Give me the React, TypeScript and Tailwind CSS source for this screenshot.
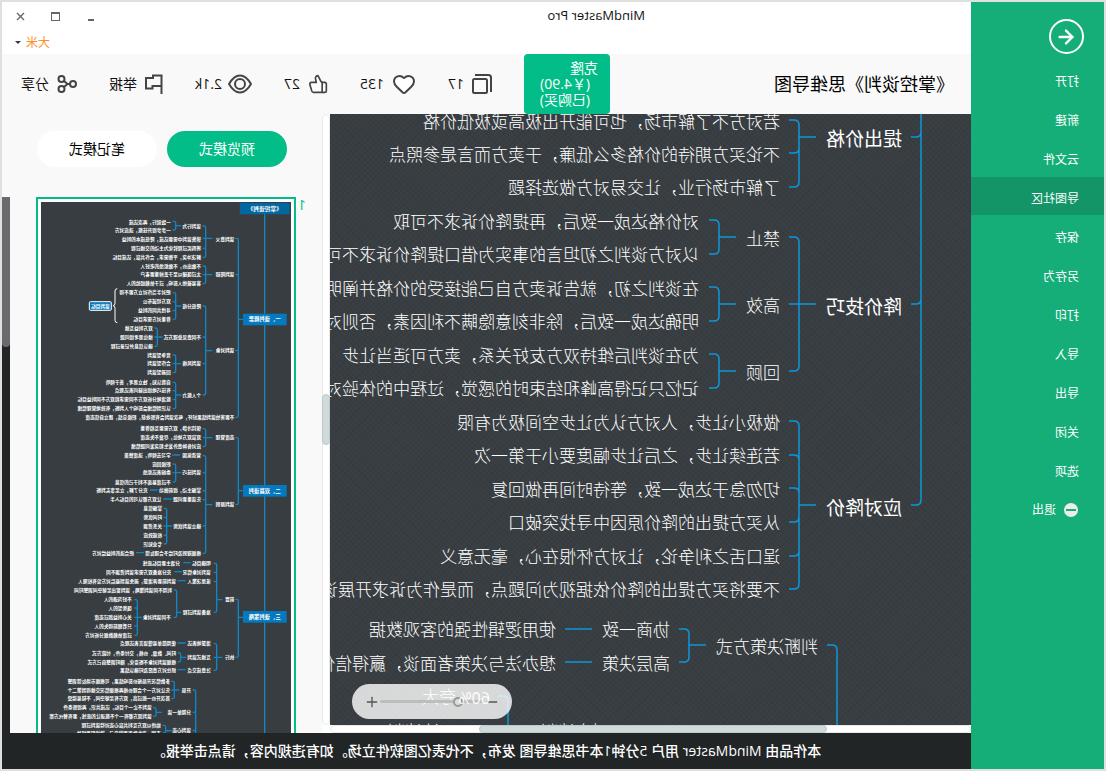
import React from 'react';
import { ArrowLeft, Heart, Minus, Plus, ThumbsUp } from 'lucide-react';

const CJK = "font-['Open_Sans','Noto_Sans_CJK_SC',sans-serif]";

interface NodeItem {
  x: number;
  y: number;
  text: string;
  big?: boolean;
}

interface ForkItem {
  trunk: number;
  from?: number;
  at?: number;
  ys: number[];
}

const menuItems = ['打开', '新建', '云文件', '导图社区', '保存', '另存为', '打印', '导入', '导出', '关闭', '选项'];

const mapNodes: NodeItem[] = [
  { x: 69, y: 26, text: '提出价格', big: true },
  { x: 69, y: 194, text: '降价技巧', big: true },
  { x: 69, y: 395, text: '应对降价', big: true },
  { x: 191, y: 8, text: '若对方不了解市场，也可能开出极高或极低价格' },
  { x: 191, y: 41, text: '不论买方期待的价格多么低廉，于卖方而言是参照点' },
  { x: 191, y: 74, text: '了解市场行业，让交易对方做选择题' },
  { x: 191, y: 125, text: '禁止' },
  { x: 272, y: 108, text: '对价格达成一致后，再提降价诉求不可取' },
  { x: 272, y: 141, text: '以对方谈判之初坦言的事实为借口提降价诉求不可取' },
  { x: 191, y: 192, text: '高效' },
  { x: 272, y: 175, text: '在谈判之初，就告诉卖方自己能接受的价格并阐明' },
  { x: 272, y: 208, text: '明确达成一致后，除非刻意隐瞒不利因素，否则对方' },
  { x: 191, y: 259, text: '回顾' },
  { x: 272, y: 242, text: '为在谈判后维持双方友好关系，卖方可适当让步' },
  { x: 272, y: 275, text: '记忆只记得高峰和结束时的感觉，过程中的体验对' },
  { x: 191, y: 309, text: '做极小让步，人对方认为让步空间极为有限' },
  { x: 191, y: 342, text: '若连续让步，之后让步幅度要小于第一次' },
  { x: 191, y: 376, text: '切勿急于达成一致，等待时间再做回复' },
  { x: 191, y: 409, text: '从买方提出的降价原因中寻找突破口' },
  { x: 191, y: 443, text: '逞口舌之利争论，让对方怀恨在心，毫无意义' },
  { x: 191, y: 476, text: '不要将买方提出的降价依据视为问题点，而是作为诉求开展谈' },
  { x: 153, y: 533, text: '判断决策方式' },
  { x: 301, y: 516, text: '协商一致' },
  { x: 415, y: 516, text: '使用逻辑性强的客观数据' },
  { x: 301, y: 550, text: '高层决策' },
  { x: 415, y: 550, text: '想办法与决策者面谈，赢得信任' },
  { x: 515, y: 583, text: '夸大' },
  { x: 362, y: 618, text: '对方谈判' },
  { x: 515, y: 618, text: '只达谈判' },
];

const mapForks: ForkItem[] = [
  { trunk: 172, from: 155, at: 23, ys: [6, 39, 73] },
  { trunk: 172, from: 155, at: 190, ys: [123, 190, 257] },
  { trunk: 252, from: 235, at: 123, ys: [106, 140] },
  { trunk: 252, from: 235, at: 190, ys: [173, 207] },
  { trunk: 252, from: 235, at: 257, ys: [240, 274] },
  { trunk: 172, from: 155, at: 391, ys: [307, 341, 374, 408, 442, 475] },
  { trunk: 50, ys: [-60, 23, 190, 391] },
  { trunk: 282, from: 265, at: 531, ys: [515, 548] },
  { trunk: 134, ys: [531, 700] },
  { trunk: 463, ys: [582, 700] },
];

// Overview of the whole map, in thirds of a pixel
const pageNodes: NodeItem[] = [
  { x: 170, y: 112, text: '谈判意义' },
  { x: 270, y: 72, text: '谈判行为' },
  { x: 361, y: 60, text: '一致就行，再次达成' },
  { x: 361, y: 86, text: '一步步提升技能，适应对方' },
  { x: 270, y: 112, text: '销售谈判中需要达成，降低成本的利益' },
  { x: 270, y: 139, text: '将购买过程转化为主动的交换过程' },
  { x: 270, y: 166, text: '解决冲突，平衡需求，合作共赢，达成目标' },
  { x: 170, y: 218, text: '谈判障碍' },
  { x: 270, y: 192, text: '不敢出价，不敢拒绝的老好人' },
  { x: 270, y: 218, text: '太过强硬以至于丢掉重要客户' },
  { x: 270, y: 245, text: '容易被他人影响，过于依赖经验的人' },
  { x: 170, y: 446, text: '谈判对象' },
  { x: 270, y: 312, text: '降低分歧' },
  { x: 361, y: 272, text: '把对手当作对立方要不得' },
  { x: 361, y: 299, text: '双方坦诚布公' },
  { x: 361, y: 326, text: '寻找共同的利益' },
  { x: 361, y: 352, text: '尊重对方需求目标' },
  { x: 270, y: 405, text: '不同意见处理方式' },
  { x: 415, y: 378, text: '双方利益互换' },
  { x: 415, y: 405, text: '换位思考提问题' },
  { x: 415, y: 433, text: '确认信息并记录过程' },
  { x: 270, y: 485, text: '谈判风格' },
  { x: 361, y: 459, text: '竞争型谈判' },
  { x: 361, y: 485, text: '合作型谈判' },
  { x: 361, y: 512, text: '回避型谈判' },
  { x: 270, y: 579, text: '个人能力' },
  { x: 361, y: 541, text: '自我认知，独立思考，善于倾听' },
  { x: 361, y: 566, text: '有技巧地提出疑问表达观点' },
  { x: 361, y: 593, text: '能清晰分析双方不同需求和双方不同利益目标' },
  { x: 361, y: 620, text: '认识到情绪会影响个人判断，有效地管理情绪' },
  { x: 170, y: 646, text: '不要害怕谈判结果好坏，每次谈判会有新收获，积极总结，建立自信态度' },
  { x: 170, y: 707, text: '态度管理' },
  { x: 270, y: 680, text: '保持冷静，双方需要互相尊重' },
  { x: 270, y: 707, text: '双赢双方地位，尽量不失态度' },
  { x: 270, y: 734, text: '应对各种意外发生和突发问题情绪' },
  { x: 170, y: 908, text: '谈判原则' },
  { x: 270, y: 761, text: '营造氛围' },
  { x: 361, y: 761, text: '学习去倾听，适度赞美' },
  { x: 270, y: 812, text: '谈判技巧' },
  { x: 361, y: 786, text: '积极回应' },
  { x: 361, y: 812, text: '委婉表达拒绝' },
  { x: 361, y: 840, text: '不过度暴露不利于己的信息' },
  { x: 270, y: 866, text: '掌握主动，提前做功' },
  { x: 430, y: 866, text: '充分了解，立足事实判断' },
  { x: 270, y: 893, text: '先谈重要问题' },
  { x: 389, y: 893, text: '让双方都认可的目标入手' },
  { x: 270, y: 972, text: '确立谈判优势' },
  { x: 387, y: 919, text: '掌握信息' },
  { x: 387, y: 946, text: '时间优势' },
  { x: 387, y: 972, text: '关系资源' },
  { x: 387, y: 1000, text: '权威效应' },
  { x: 387, y: 1026, text: '专业知识' },
  { x: 270, y: 1054, text: '根据规则及时给予合理反馈' },
  { x: 471, y: 1054, text: '把合适的利益给对方' },
  { x: 170, y: 1193, text: '前置' },
  { x: 241, y: 1084, text: '明确目标' },
  { x: 333, y: 1084, text: '分清主要目标底线' },
  { x: 241, y: 1111, text: '谈判对象情况' },
  { x: 359, y: 1111, text: '充分准备双方需求谈判资源不同' },
  { x: 241, y: 1138, text: '谁是决策人' },
  { x: 345, y: 1138, text: '谈判前要弄清楚，避免谈到最后对方没有权限人' },
  { x: 241, y: 1231, text: '准备谈判过程' },
  { x: 357, y: 1164, text: '利用不同谈判策略，谈判留出足够空间调整时间' },
  { x: 361, y: 1246, text: '不同谈判对象' },
  { x: 478, y: 1193, text: '不好沟通的人' },
  { x: 478, y: 1218, text: '强势型的人' },
  { x: 478, y: 1246, text: '关心利益超过态度' },
  { x: 478, y: 1272, text: '只看眼前得失的人' },
  { x: 478, y: 1300, text: '过度依赖数据分析对方' },
  { x: 170, y: 1366, text: '执行' },
  { x: 241, y: 1325, text: '清楚地表达' },
  { x: 345, y: 1325, text: '使用简单易懂语言表达观点' },
  { x: 241, y: 1366, text: '互换式谈判' },
  { x: 345, y: 1353, text: '时间、数量、价格，交付条件，付款方式' },
  { x: 345, y: 1380, text: '根据谈判对象不断变化，随时调整自己方式' },
  { x: 241, y: 1405, text: '注意成交点' },
  { x: 345, y: 1405, text: '抓住对方意愿及时确认结果' },
  { x: 300, y: 1464, text: '开局' },
  { x: 363, y: 1438, text: '多数情况开局报价影响结果，可根据市场反馈调整' },
  { x: 363, y: 1464, text: '先让对方一个合理价格再根据情况交换得到第二个' },
  { x: 363, y: 1490, text: '首次开价一般过高，双方有足够空间，不轻易接受' },
  { x: 300, y: 1531, text: '分期单一谈' },
  { x: 418, y: 1517, text: '谈判不止一个目标，达成共识，再提新条件' },
  { x: 418, y: 1543, text: '谈判双方都有一个不能退让的底线，要有替代方案' },
  { x: 300, y: 1586, text: '谈判心态' },
  { x: 391, y: 1570, text: '始终以双方互利共赢心态对待谈判过程' },
  { x: 391, y: 1593, text: '不因一次失败而否定自己，持续积累经验' },
];

const pageForks: ForkItem[] = [
  { trunk: 158, from: 144, at: 352, ys: [109, 218, 446, 646] },
  { trunk: 256, from: 236, at: 109, ys: [72, 109, 139, 166] },
  { trunk: 346, from: 330, at: 71, ys: [58, 84] },
  { trunk: 256, from: 236, at: 218, ys: [192, 218, 245] },
  { trunk: 256, from: 236, at: 446, ys: [312, 405, 485, 579] },
  { trunk: 346, from: 330, at: 312, ys: [272, 299, 326, 352] },
  { trunk: 401, from: 385, at: 405, ys: [378, 405, 433] },
  { trunk: 346, from: 330, at: 485, ys: [459, 485, 512] },
  { trunk: 346, from: 330, at: 579, ys: [541, 566, 593, 620] },
  { trunk: 158, from: 144, at: 866, ys: [707, 908] },
  { trunk: 256, from: 236, at: 707, ys: [680, 707, 734] },
  { trunk: 256, from: 236, at: 908, ys: [761, 812, 866, 893, 972, 1054] },
  { trunk: 346, from: 330, at: 812, ys: [786, 812, 840] },
  { trunk: 373, from: 357, at: 972, ys: [919, 946, 972, 1000, 1026] },
  { trunk: 158, from: 144, at: 1246, ys: [1192, 1366] },
  { trunk: 223, from: 206, at: 1193, ys: [1084, 1111, 1138, 1231] },
  { trunk: 343, from: 330, at: 1231, ys: [1164, 1246] },
  { trunk: 461, from: 447, at: 1246, ys: [1193, 1218, 1246, 1272, 1300] },
  { trunk: 223, from: 206, at: 1366, ys: [1325, 1366, 1405] },
  { trunk: 331, from: 315, at: 1366, ys: [1353, 1380] },
  { trunk: 286, ys: [1464, 1531, 1586, 1700] },
  { trunk: 350, from: 335, at: 1464, ys: [1438, 1464, 1490] },
  { trunk: 405, from: 388, at: 1531, ys: [1517, 1543] },
  { trunk: 376, from: 358, at: 1586, ys: [1570, 1593] },
];

const pageSections = [
  { y: 335, text: '一、谈判概要' },
  { y: 849, text: '二、双赢谈判' },
  { y: 1227, text: '三、谈判策略' },
];

const forkPath = ({ trunk, from, at, ys }: ForkItem, radius: number, stub: number) => {
  const first = ys[0];
  const last = ys[ys.length - 1];
  const mid = at ?? first + radius;
  const stem = from === undefined ? '' : `M${from} ${mid}H${trunk}`;
  const arms = ys
    .map((y) => {
      if (y === mid) return `M${trunk} ${y}H${trunk + stub}`;
      const bend = y < mid ? radius : -radius;
      return `M${trunk} ${y + bend}Q${trunk} ${y} ${trunk + radius} ${y}H${trunk + stub}`;
    })
    .join('');
  return `${stem}M${trunk} ${first + radius}V${last - radius}${arms}`;
};

const Sidebar: React.FC = () => (
  <aside className="flex w-[133px] shrink-0 flex-col bg-[#15ae79] text-xs text-white">
    <button
      aria-label="返回"
      className="mt-[17px] ml-5 flex h-[35px] w-[35px] items-center justify-center rounded-full border-2 border-white"
    >
      <ArrowLeft className="h-[22px] w-[22px]" strokeWidth={2.6} />
    </button>
    <nav className="mt-1.5 flex flex-col gap-px">
      {menuItems.map((item) => (
        <button
          key={item}
          className={`flex h-[38px] items-center pt-1.5 pl-[25px] text-left ${item === '导图社区' ? 'bg-[#139568]' : ''}`}
        >
          {item}
        </button>
      ))}
      <button className="flex h-[38px] items-center gap-2 pt-1 pl-[26px]">
        <span className="flex h-3.5 w-3.5 items-center justify-center rounded-full bg-[#ececec]">
          <span className="h-0.5 w-2.5 bg-[#15ae79]" />
        </span>
        <span>退出</span>
      </button>
    </nav>
  </aside>
);

const TitleBar: React.FC = () => (
  <header className="h-[52px] shrink-0 bg-white">
    <div className="flex h-7 items-center justify-between pr-3.5 pl-[326px]">
      <h1 className="text-[13px] text-[#111]">MindMaster Pro</h1>
      <div className="flex items-center gap-[26px] text-[#666]">
        <button aria-label="最小化" className="flex h-3 w-2 items-end pb-px">
          <span className="h-0.5 w-1.5 bg-[#666]" />
        </button>
        <button aria-label="最大化" className="h-[9px] w-[9px] border border-t-2 border-[#666]" />
        <button aria-label="关闭">
          <svg width="9" height="9" viewBox="0 0 9 9" stroke="currentColor" strokeWidth="1.4">
            <path d="M1 1l7 7M8 1L1 8" />
          </svg>
        </button>
      </div>
    </div>
    <div className="flex h-6 items-center justify-end pt-0.5 pr-3 text-xs text-[#ff9029]">
      <button className="flex items-center gap-1">
        大米
        <svg width="8" height="4" viewBox="0 0 8 4" fill="#333b4a">
          <path d="M1 0h6L4 3z" />
        </svg>
      </button>
    </div>
  </header>
);

const CloneIcon: React.FC = () => (
  <svg width="20" height="20" viewBox="0 0 20 20" fill="none" stroke="#444" strokeWidth="2">
    <rect x="5" y="5" width="14" height="14" rx="1.5" />
    <path d="M1 18V3.500Q1 1 3.500 1H17" />
  </svg>
);

const EyeIcon: React.FC = () => (
  <svg width="24" height="20" viewBox="0 0 24 20" fill="none" stroke="#444" strokeWidth="2">
    <path d="M1 10C4.500 4 8 1.500 12 1.500S19.500 4 23 10c-3.500 6-7 8.500-11 8.500S4.500 16 1 10z" />
    <circle cx="12" cy="10" r="5" />
  </svg>
);

const FlagIcon: React.FC = () => (
  <svg width="18" height="20" viewBox="0 0 18 20" fill="none" stroke="#444" strokeWidth="2">
    <path d="M1.500 20V1.500H10V4h7v10.500H10.500V12h-9" />
  </svg>
);

const ShareIcon: React.FC = () => (
  <svg width="20" height="20" viewBox="0 0 20 20" fill="none" stroke="#444" strokeWidth="2">
    <circle cx="4" cy="10" r="3" />
    <circle cx="15.500" cy="5" r="3" />
    <circle cx="15.500" cy="15" r="3" />
    <path d="M7 10H9.500L13 7M9.500 10L13 13" />
  </svg>
);

const Toolbar: React.FC = () => (
  <div className="flex h-[60px] shrink-0 items-center bg-[#f9f9f9] pr-[19px] pl-[17px] text-sm text-[#111]">
    <h2 className="text-lg whitespace-nowrap text-black">《掌控谈判》思维导图</h2>
    <div className="ml-auto flex items-center gap-8 whitespace-nowrap">
      <button className="flex h-[60px] w-[86px] flex-col items-start justify-center rounded-sm bg-[#02bd88] pl-3 text-left leading-4 text-white">
        <span>克隆</span>
        <span className="pl-2">(￥4.90)</span>
        <span className="pl-2">(已购买)</span>
      </button>
      <button className="flex items-center gap-2">
        <CloneIcon />
        17
      </button>
      <button className="flex items-center gap-2">
        <Heart className="h-6 w-6 text-[#444]" fill="#fff" />
        135
      </button>
      <button className="flex items-center gap-2">
        <ThumbsUp className="h-5 w-5 text-[#444]" fill="#fff" />
        27
      </button>
      <span className="flex items-center gap-1.5">
        <EyeIcon />
        2.1k
      </span>
      <button className="flex items-center gap-2">
        <FlagIcon />
        举报
      </button>
      <button className="flex items-center gap-2">
        <ShareIcon />
        分享
      </button>
    </div>
  </div>
);

const ZoomControl: React.FC = () => (
  <div className="absolute right-[22px] bottom-1.5 flex h-[35px] w-40 items-center rounded-full bg-white/80 px-3 text-[#555]">
    <button aria-label="缩小">
      <Minus className="h-4 w-4" />
    </button>
    <input
      type="range"
      aria-label="缩放"
      min={0}
      max={100}
      defaultValue={22}
      className="h-[3px] min-w-0 flex-1 appearance-none rounded bg-[#bdbdbd] [&::-webkit-slider-thumb]:h-2.5 [&::-webkit-slider-thumb]:w-2.5 [&::-webkit-slider-thumb]:appearance-none [&::-webkit-slider-thumb]:rounded-full [&::-webkit-slider-thumb]:border-2 [&::-webkit-slider-thumb]:border-[#999] [&::-webkit-slider-thumb]:bg-[#ddd]"
    />
    <button aria-label="放大">
      <Plus className="h-4 w-4" />
    </button>
    <span className="absolute top-1 left-[22px] text-base leading-5 text-white">60%</span>
  </div>
);

const MapCanvas: React.FC = () => (
  <main className="relative min-w-0 flex-1 overflow-hidden bg-[#3a3f43] bg-[repeating-linear-gradient(45deg,rgba(0,0,0,.05)_0_1px,transparent_1px_4px),repeating-linear-gradient(-45deg,rgba(0,0,0,.05)_0_1px,transparent_1px_4px)]">
    <svg
      width="960"
      height="700"
      className="absolute top-0 left-0 font-['Noto_Sans_CJK_SC',sans-serif] text-[17px] font-light"
      fill="#fff"
    >
      <g fill="none" stroke="#0d97dc" strokeWidth="1.5">
        {mapForks.map((fork, i) => (
          <path key={i} d={forkPath(fork, 5, 10)} />
        ))}
        <path d="M379 515h27M379 548h27" />
      </g>
      {mapNodes.map((node) => (
        <text key={`${node.x}-${node.y}`} x={node.x} y={node.y + 6} className={node.big ? 'text-[19px] font-normal' : ''}>
          {node.text}
        </text>
      ))}
    </svg>
    <ZoomControl />
  </main>
);

const PageThumbnail: React.FC = () => (
  <svg
    viewBox="0 0 750 1620"
    width="250"
    height="540"
    className="bg-[#383d41] font-['Noto_Sans_CJK_SC',sans-serif] text-[14px] font-bold"
    fill="#fff"
  >
    <g fill="none" stroke="#0f86c6" strokeWidth="4">
      <path d="M79 34V1620" />
      {pageForks.map((fork, i) => (
        <path key={i} d={forkPath(fork, 5, 9)} />
      ))}
      <path d="M333 759h23M400 864h23M358 891h25M441 1052h24M301 1082h22M327 1109h23M316 1136h24M316 1323h24M316 1403h24" />
    </g>
    <path d="M521 260q7 0 7 7v36q0 8 6 8q-6 0-6 8v36q0 7-7 7" fill="none" stroke="#fff" strokeWidth="3" />
    <rect x="539" y="299" width="66" height="26" rx="3" fill="#0a79bb" stroke="#fff" strokeWidth="3" />
    <text x="572" y="317" textAnchor="middle">谈判目标</text>
    <rect x="4" y="3" width="150" height="34" fill="#00679f" />
    <text x="79" y="26" textAnchor="middle" className="text-[17px]">《掌控谈判》</text>
    {pageSections.map((section) => (
      <g key={section.y}>
        <rect x="13" y={section.y} width="131" height="35" fill="#0579bd" />
        <text x="79" y={section.y + 23} textAnchor="middle" className="text-[16px]">
          {section.text}
        </text>
      </g>
    ))}
    {pageNodes.map((node) => (
      <text key={`${node.x}-${node.y}`} x={node.x} y={node.y + 5}>
        {node.text}
      </text>
    ))}
  </svg>
);

const PreviewPanel: React.FC = () => (
  <section className="flex w-[312px] shrink-0 flex-col overflow-hidden bg-[#f9f9f9]">
    <div className="flex gap-2.5 pt-[17px] pl-[35px] text-sm">
      <button className="h-9 w-[120px] rounded-full bg-[#02bd88] text-white">预览模式</button>
      <button className="h-9 w-[120px] rounded-full bg-white text-black">笔记模式</button>
    </div>
    <div className="mt-[30px] flex min-h-0 flex-1 pl-4">
      <span className="w-2.5 text-sm leading-4 text-[#02bd88]">1</span>
      <div className="flex h-[550px] shrink-0 items-start border-2 border-[#02bd88] bg-white p-[3px]">
        <PageThumbnail />
      </div>
    </div>
  </section>
);

const App: React.FC = () => {
  return (
    <div className="min-h-screen -scale-x-100 bg-[#e0e0e0] p-0.5">
      <div className={`flex h-[calc(100vh-4px)] bg-white text-[#222] ${CJK}`}>
        <Sidebar />
        <div className="flex min-w-0 flex-1 flex-col">
          <TitleBar />
          <Toolbar />
          <div className="flex min-h-0 flex-1">
            <div className="flex min-w-0 flex-1 flex-col">
              <div className="flex min-h-0 flex-1">
                <MapCanvas />
                <div className="w-2 shrink-0 rounded border border-[#e8e8e8] bg-white pt-[279px]">
                  <div className="-mx-px h-[51px] rounded border border-[#bccaca] bg-[#d0dada]" />
                </div>
              </div>
              <div className="mr-2 h-2 shrink-0 rounded border border-[#e8e8e8] bg-white pl-[143px]">
                <div className="-mt-px h-2 w-[348px] rounded border border-[#bccaca] bg-[#d0dada]" />
              </div>
            </div>
            <PreviewPanel />
            <div className="flex w-2 shrink-0 flex-col bg-[#f9f9f9] pt-[83px]">
              <div className="flex-1 bg-[#212526]">
                <div className="h-[150px] rounded-b bg-[#69696e]" />
              </div>
            </div>
          </div>
          <footer className="flex h-9 shrink-0 items-center justify-center bg-[#212526] text-sm font-medium whitespace-nowrap text-white">
            本作品由 MindMaster 用户 5分钟1本书思维导图 发布，不代表亿图软件立场。如有违规内容，请点击举报。
          </footer>
        </div>
      </div>
    </div>
  );
};

export default App;
